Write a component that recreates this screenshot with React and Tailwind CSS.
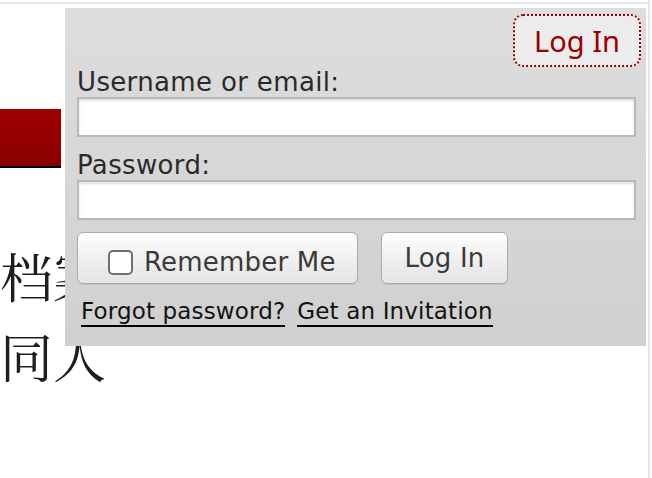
import React from "react";

const sans = { fontFamily: '"DejaVu Sans", "Liberation Sans", sans-serif' };

export default function App() {
  return (
    <div className="relative w-[652px] h-[478px] overflow-hidden bg-white">
      {/* page behind the login panel */}
      <div className="w-[650px] h-[478px] pt-[2px] border-r-2 border-[#e4e6e8]">
        <div className="h-[2px] bg-[#dde7ec]" />
        <div className="mt-[105px] w-[61px] h-[59px] bg-gradient-to-b from-[#a00000] to-[#880000] border-b-2 border-black" />
        <div
          className="mt-[67px] w-[120px] text-[53px] leading-[80px] text-[#1e1e1e]"
          style={{ fontFamily: '"Noto Serif CJK SC", "Noto Sans CJK SC", serif' }}
        >
          <div>档案</div>
          <div>同人</div>
        </div>
      </div>

      {/* login dropdown panel */}
      <div
        className="absolute left-[65px] top-[8px] w-[581px] h-[338px] bg-gradient-to-b from-[#dddddd] to-[#d0d0d0] flex flex-col"
        style={sans}
      >
        <div className="flex justify-end pt-[6px] pr-[5px]">
          <div
            className="w-[128px] h-[53px] flex items-center justify-center rounded-[10px] border-2 border-dotted border-[#990000] bg-[#ececec] text-[#990000] text-[29px]"
            style={{ fontFamily: '"Noto Sans", "Open Sans", sans-serif' }}
          >
            Log In
          </div>
        </div>

        <div className="pl-[12px] pr-[10px] flex flex-col">
          <label className="text-[26px] leading-[30px] tracking-[0.35px] text-[#2a2a2a]">Username or email:</label>
          <div className="h-[40px] bg-white border-2 border-[#b9b9b9] shadow-[inset_0_2px_3px_rgba(0,0,0,0.12)]" />
          <label className="mt-[13px] text-[26px] leading-[30px] tracking-[0.35px] text-[#2a2a2a]">Password:</label>
          <div className="h-[40px] bg-white border-2 border-[#b9b9b9] shadow-[inset_0_2px_3px_rgba(0,0,0,0.12)]" />

          <div className="mt-[12px] flex gap-[23px]">
            <div className="w-[281px] h-[52px] flex items-center pl-[30px] pt-[8px] gap-[11px] rounded-[6px] border border-[#ababab] bg-gradient-to-b from-[#fdfdfd] to-[#e4e4e4] shadow-[0_1px_0_rgba(0,0,0,0.08)] text-[26px] tracking-[0.2px] text-[#3a3a3a]">
              <span className="w-[25px] h-[25px] rounded-[5px] border-2 border-[#6f6f6f] bg-white" />
              <span>Remember Me</span>
            </div>
            <div className="w-[127px] h-[52px] flex items-center justify-center rounded-[6px] border border-[#ababab] bg-gradient-to-b from-[#fdfdfd] to-[#e4e4e4] shadow-[0_1px_0_rgba(0,0,0,0.08)] text-[26px] tracking-[0.2px] text-[#3a3a3a]">
              Log In
            </div>
          </div>

          <div className="mt-[14px] pl-[4px] flex gap-[12px] text-[23px] leading-[27px] tracking-[0.15px] text-[#111]">
            <span className="border-b-2 border-black">Forgot password?</span>
            <span className="border-b-2 border-black">Get an Invitation</span>
          </div>
        </div>
      </div>
    </div>
  );
}
